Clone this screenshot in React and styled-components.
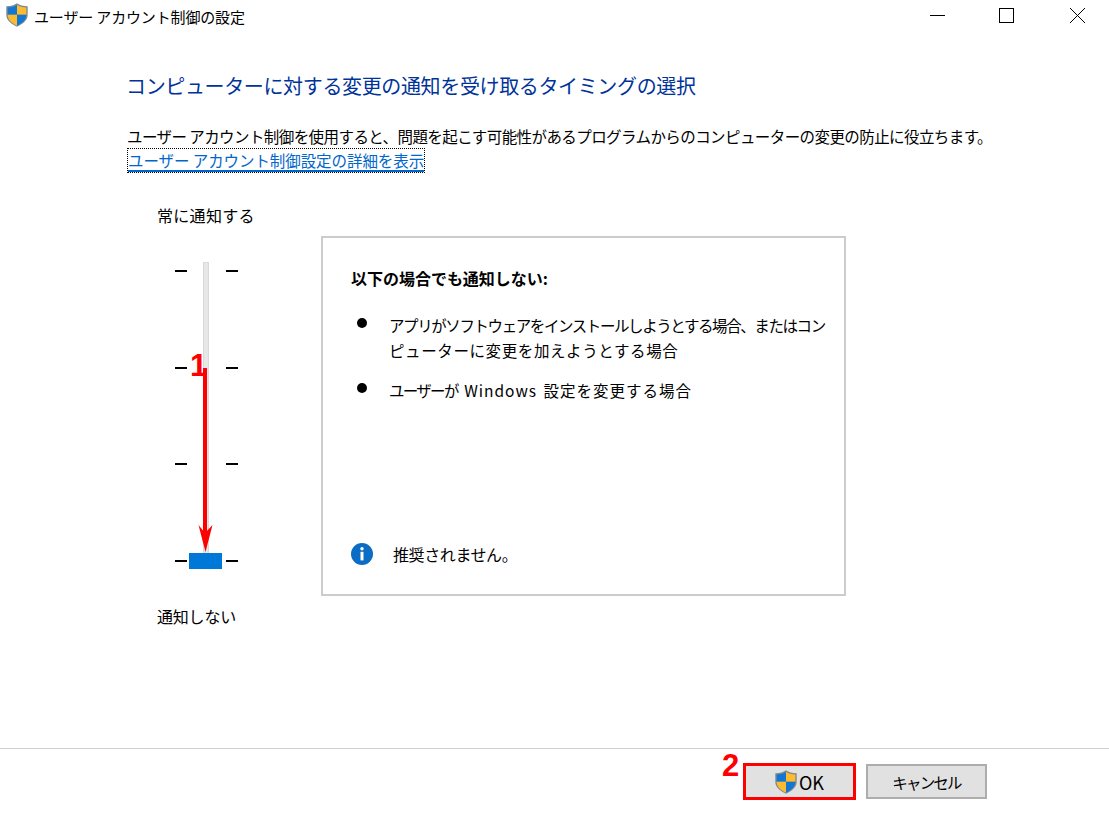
import React from "react";
import styled, { createGlobalStyle } from "styled-components";

const GlobalStyle = createGlobalStyle`
  html, body {
    margin: 0;
    padding: 0;
    background: #ffffff;
  }
  body {
    font-family: "Noto Sans CJK JP", "Noto Sans", sans-serif;
    color: #000000;
  }
`;

const Window = styled.div`
  position: relative;
  width: 1109px;
  height: 821px;
  display: flex;
  flex-direction: column;
  overflow: hidden;
  background: #ffffff;
`;

const TitleBar = styled.div`
  height: 33px;
  display: flex;
  align-items: center;
  padding: 0 24px 0 6px;
  flex-shrink: 0;
`;

const TitleIcon = styled.div`
  display: flex;
  margin-top: -3px;
`;

const TitleText = styled.div`
  margin-left: 6px;
  font-size: 15px;
  line-height: 33px;
  color: #000000;
  white-space: nowrap;
  letter-spacing: -0.15px;
`;

const WindowControls = styled.div`
  margin-left: auto;
  align-self: flex-start;
  display: flex;
  align-items: center;
  height: 31px;
`;

const ControlButton = styled.div`
  width: 15px;
  height: 15px;
  margin-left: ${(p) => p.$gap || "0"};
  display: flex;
`;

const Content = styled.div`
  flex: 1;
  display: flex;
  flex-direction: column;
  padding-left: 127px;
`;

const Heading = styled.h1`
  margin: 37px 0 0 -1px;
  font-size: 20px;
  font-weight: 400;
  line-height: 32px;
  color: #003399;
  white-space: nowrap;
  letter-spacing: -0.36px;
`;

const Description = styled.p`
  margin: 22px 0 0;
  font-size: 15.5px;
  line-height: 24px;
  white-space: nowrap;
  letter-spacing: -0.58px;
`;

const HelpLink = styled.a`
  align-self: flex-start;
  display: block;
  box-sizing: border-box;
  height: 23px;
  margin: 1px 0 0 1px;
  font-size: 15.5px;
  line-height: 22px;
  letter-spacing: -0.08px;
  color: #0066cc;
  border-bottom: 2px solid #0066cc;
  white-space: nowrap;
  outline: 1px dotted #000000;
`;

const SettingsRow = styled.div`
  display: flex;
  margin-top: 32px;
`;

const SliderColumn = styled.div`
  width: 194px;
  padding-left: 30px;
  box-sizing: border-box;
  flex-shrink: 0;
`;

const SliderLabel = styled.div`
  font-size: 16px;
  line-height: 24px;
  white-space: nowrap;
  margin-top: ${(p) => p.$top};
  letter-spacing: ${(p) => p.$spacing};
`;

const Slider = styled.div`
  position: relative;
  width: 63px;
  height: 292px;
  margin: 43px 0 0 18px;
  display: flex;
  flex-direction: column;
  justify-content: space-between;
`;

const TickRow = styled.div`
  display: flex;
  justify-content: space-between;
`;

const Tick = styled.span`
  display: block;
  width: 12px;
  height: 2px;
  background: #000000;
`;

const Track = styled.div`
  position: absolute;
  left: 28px;
  top: -8px;
  width: 6px;
  height: 307px;
  box-sizing: border-box;
  background: #e7e7e7;
  border: 1px solid #d9d9d9;
`;

const Thumb = styled.div`
  position: absolute;
  left: 14px;
  top: 283px;
  width: 33px;
  height: 16px;
  background: #0078d7;
`;

const Panel = styled.div`
  width: 525px;
  height: 360px;
  box-sizing: border-box;
  margin-top: 32px;
  border: 2px solid #cccccc;
  padding: 28px 18px 0 28px;
  display: flex;
  flex-direction: column;
`;

const PanelTitle = styled.div`
  font-size: 16px;
  font-weight: 700;
  line-height: 24px;
  white-space: nowrap;
  letter-spacing: -0.02px;
`;

const BulletList = styled.ul`
  list-style: none;
  margin: 23px 0 0;
  padding: 0;
  display: flex;
  flex-direction: column;
  gap: 15px;
`;

const BulletItem = styled.li`
  display: flex;
  font-size: 15.5px;
  line-height: 25px;
  &::before {
    content: "";
    flex-shrink: 0;
    width: 10px;
    height: 10px;
    margin: 5px 22px 0 6px;
    border-radius: 50%;
    background: #000000;
  }
`;

const BulletLine = styled.span`
  display: block;
  white-space: nowrap;
  letter-spacing: ${(p) => p.$spacing};
  word-spacing: ${(p) => p.$wordSpacing || "0"};
`;

const TightRun = styled.span`
  letter-spacing: -1.7px;
`;

const Notice = styled.div`
  margin-top: auto;
  margin-bottom: 28px;
  display: flex;
  align-items: center;
  gap: 20px;
  font-size: 16px;
  line-height: 24px;
  letter-spacing: -0.4px;
`;

const Footer = styled.div`
  height: 73px;
  box-sizing: border-box;
  flex-shrink: 0;
  border-top: 1px solid #d0d0d0;
  display: flex;
  justify-content: flex-end;
  align-items: flex-start;
  gap: 10px;
  padding: 15px 122px 0 0;
`;

const DialogButton = styled.button`
  width: ${(p) => p.$width};
  height: ${(p) => (p.$marked ? "37px" : "35px")};
  margin-top: ${(p) => (p.$marked ? "-1px" : "0")};
  box-sizing: border-box;
  border: ${(p) => (p.$marked ? "3px solid #ff0000" : "2px solid #adadad")};
  background: #e1e1e1;
  font-family: inherit;
  font-size: ${(p) => (p.$marked ? "18px" : "15.500px")};
  letter-spacing: ${(p) => (p.$marked ? "0" : "-1.800px")};
  color: #000000;
  padding: 0;
  display: flex;
  align-items: center;
  justify-content: center;
  gap: 2px;
`;

const Callout = styled.div`
  position: absolute;
  left: ${(p) => p.$left};
  top: ${(p) => p.$top};
  font-family: "Liberation Sans", Arial, sans-serif;
  font-size: 31px;
  font-weight: 700;
  line-height: 31px;
  color: #ff0000;
`;

const ArrowOverlay = styled.svg`
  position: absolute;
  left: 195px;
  top: 366px;
`;

const ShieldIcon = () => (
  <svg width="22" height="24" viewBox="0 0 22 24">
    <path d="M11 .3c2.800 1.900 6 2.800 10.700 2.900v8.600c0 5.300-4.300 9-10.700 11.900C4.600 20.800.3 17.100.3 11.800V3.200C5 3.100 8.200 2.200 11 .3z" fill="#7f8a94" />
    <path d="M11 1.700v10.100H1.700V4.500C5.600 4.400 8.600 3.400 11 1.700z" fill="#1277d3" />
    <path d="M11 1.700c2.400 1.700 5.400 2.700 9.300 2.800v7.300H11z" fill="#fdbb2d" />
    <path d="M1.700 11.800H11v10.900c-5.300-2.500-9.300-5.800-9.300-10.900z" fill="#fdbb2d" />
    <path d="M11 11.800h9.300c0 5.100-4 8.400-9.300 10.900z" fill="#1277d3" />
  </svg>
);

const InfoIcon = () => (
  <svg width="22" height="22" viewBox="0 0 22 22">
    <circle cx="11" cy="11" r="11" fill="#0a6cc4" />
    <circle cx="11" cy="5.800" r="1.700" fill="#ffffff" />
    <rect x="9.500" y="8.800" width="3" height="8.600" fill="#ffffff" />
  </svg>
);

export default function App() {
  return (
    <>
      <GlobalStyle />
      <Window>
        <TitleBar>
          <TitleIcon>
            <ShieldIcon />
          </TitleIcon>
          <TitleText>ユーザー アカウント制御の設定</TitleText>
          <WindowControls>
            <ControlButton>
              <svg width="15" height="15" viewBox="0 0 15 15">
                <rect x="0" y="7" width="15" height="1" fill="#000" />
              </svg>
            </ControlButton>
            <ControlButton $gap="54px">
              <svg width="15" height="15" viewBox="0 0 15 15">
                <rect x=".5" y=".5" width="14" height="14" fill="none" stroke="#000" />
              </svg>
            </ControlButton>
            <ControlButton $gap="56px">
              <svg width="15" height="15" viewBox="0 0 15 15">
                <path d="M0 0L15 15M15 0L0 15" stroke="#000" strokeWidth="1" />
              </svg>
            </ControlButton>
          </WindowControls>
        </TitleBar>

        <Content>
          <Heading>コンピューターに対する変更の通知を受け取るタイミングの選択</Heading>
          <Description>
            ユーザー アカウント制御を使用すると、問題を起こす可能性があるプログラムからのコンピューターの変更の防止に役立ちます。
          </Description>
          <HelpLink>ユーザー アカウント制御設定の詳細を表示</HelpLink>

          <SettingsRow>
            <SliderColumn>
              <SliderLabel $top="-1px" $spacing="0.3px">常に通知する</SliderLabel>
              <Slider>
                <Track />
                <TickRow><Tick /><Tick /></TickRow>
                <TickRow><Tick /><Tick /></TickRow>
                <TickRow><Tick /><Tick /></TickRow>
                <TickRow><Tick /><Tick /></TickRow>
                <Thumb />
              </Slider>
              <SliderLabel $top="42px" $spacing="-0.2px">通知しない</SliderLabel>
            </SliderColumn>

            <Panel>
              <PanelTitle>以下の場合でも通知しない:</PanelTitle>
              <BulletList>
                <BulletItem>
                  <div>
                    <BulletLine $spacing="-1.42px">アプリがソフトウェアをインストールしようとする場合、またはコン</BulletLine>
                    <BulletLine $spacing="0.6px">ピューターに変更を加えようとする場合</BulletLine>
                  </div>
                </BulletItem>
                <BulletItem>
                  <BulletLine $spacing="1px" $wordSpacing="2px">
                    <TightRun>ユーザーが</TightRun> Windows 設定を変更する場合
                  </BulletLine>
                </BulletItem>
              </BulletList>
              <Notice>
                <InfoIcon />
                推奨されません。
              </Notice>
            </Panel>
          </SettingsRow>
        </Content>

        <Footer>
          <DialogButton $width="113px" $marked>
            <ShieldIcon />
            OK
          </DialogButton>
          <DialogButton $width="121px">キャンセル</DialogButton>
        </Footer>

        <Callout $left="190px" $top="350px">1</Callout>
        <Callout $left="722px" $top="750px">2</Callout>
        <ArrowOverlay width="20" height="190" viewBox="0 0 20 190">
          <rect x="8" y="2" width="4" height="165" fill="#ff0000" />
          <path d="M3.500 159L10 167L17.500 159L10.500 186z" fill="#ff0000" />
        </ArrowOverlay>
      </Window>
    </>
  );
}
